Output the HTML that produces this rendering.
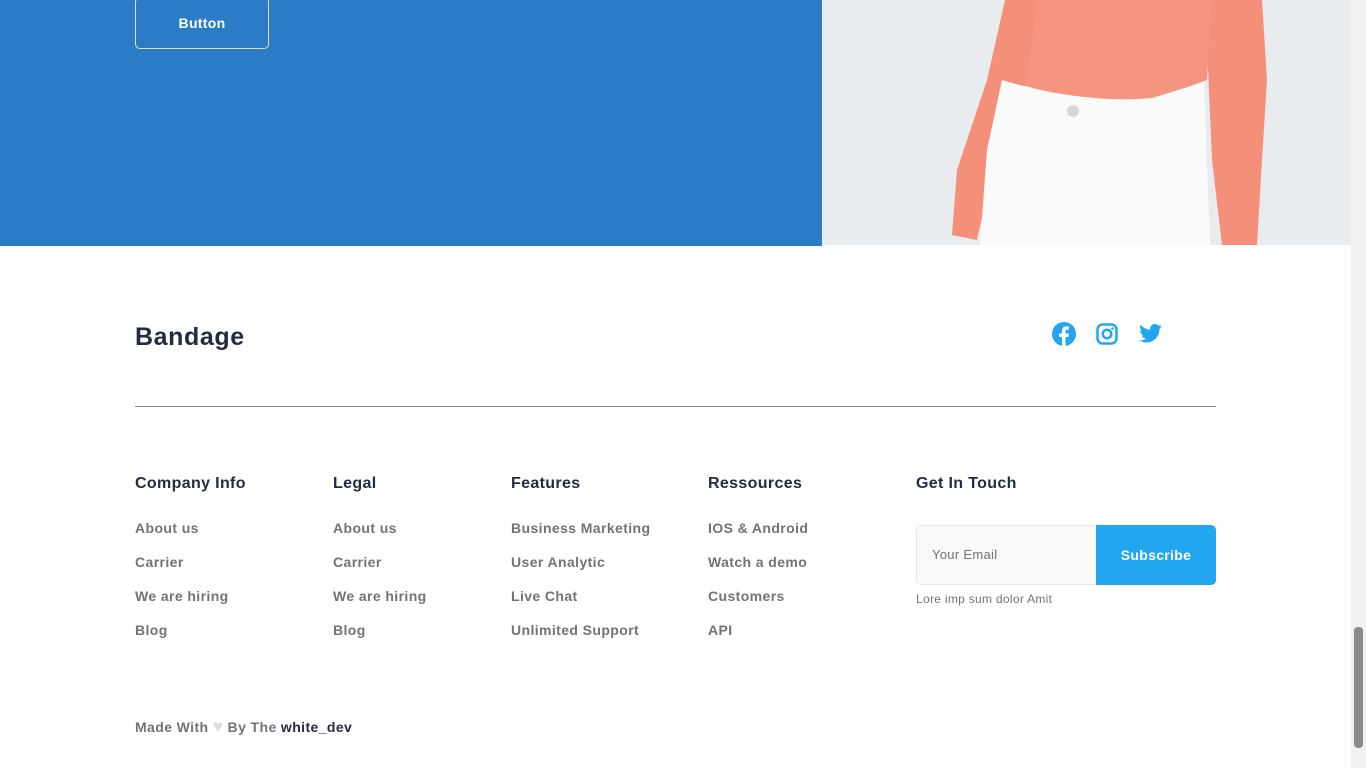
<!DOCTYPE html>
<html><head><meta charset="utf-8"><style>
*{margin:0;padding:0;box-sizing:border-box}
html,body{width:1366px;height:768px;overflow:hidden;background:#fff;font-family:"Liberation Sans",sans-serif}
.abs{position:absolute}
.blue{left:0;top:0;width:822px;height:246px;background:#2a7cc7}
.btn{left:135px;top:-3px;width:134px;height:52px;border:1px solid #e8dcc0;border-radius:5px;color:#fff;font-weight:bold;font-size:14px;text-align:center;line-height:50px;letter-spacing:0.3px}
.img{left:822px;top:0;width:529px;height:245px;background:#e8ebee;overflow:hidden}
.scroll{left:1351px;top:0;width:15px;height:768px;background:#f1f1f1}
.thumb{left:1354px;top:627px;width:9px;height:121px;background:#8a8a8a;border-radius:4px}
.brand{left:135px;top:323px;font-size:25px;font-weight:bold;color:#252b42;letter-spacing:0.6px}
.hr{left:135px;top:406px;width:1081px;height:1px;background:#8f8f8f}
h5{position:absolute;top:475px;font-size:16px;font-weight:bold;color:#252b42;letter-spacing:0.35px}
.col{position:absolute;top:520px}
.col div{font-size:14px;font-weight:bold;color:#737373;height:34px;letter-spacing:0.4px}
.email{left:916px;top:525px;width:181px;height:60px;background:#f9f9f9;border:1px solid #e6e6e6;border-radius:5px 0 0 5px;font-size:13px;color:#737373;padding-left:15px;line-height:58px;letter-spacing:0.3px}
.sub{left:1096px;top:525px;width:120px;height:60px;background:#23a6f0;border-radius:0 5px 5px 0;color:#fff;font-size:14px;font-weight:bold;text-align:center;line-height:60px;letter-spacing:0.3px}
.lore{left:916px;top:592px;font-size:12px;color:#737373;letter-spacing:0.3px}
.made{left:135px;top:719px;font-size:14px;font-weight:bold;color:#737373;letter-spacing:0.4px}
</style></head><body>
<div class="abs blue"></div>
<div class="abs btn">Button</div>
<div class="abs img">
<svg width="529" height="245" viewBox="0 0 529 245">
<rect width="529" height="245" fill="#e9ecef"/>
<path d="M383 0 L440 0 L445 80 L440 160 L435 245 L400 245 L390 160 Z" fill="#f4907a"/>
<path d="M185 0 L390 0 L385 80 L330 100 L260 102 L200 85 Z" fill="#f5957f"/>
<path d="M183 0 L215 0 L205 80 L170 170 L155 240 L130 235 L135 170 L165 80 Z" fill="#f4907a"/>
<path d="M180 80 Q260 104 330 98 L382 82 L388 245 L158 245 L165 150 Z" fill="#fafafa"/>
<circle cx="251" cy="111" r="6" fill="#d8d8d8"/>
</svg>
</div>
<div class="abs scroll"></div>
<div class="abs thumb"></div>
<div class="abs brand">Bandage</div>
<svg class="abs" style="left:1052px;top:322px" width="24" height="24" viewBox="0 0 24 24"><circle cx="12" cy="12" r="12" fill="#23a6f0"/><path d="M13.5 24V15h3l.5-3.5h-3.5V9.3c0-1 .3-1.7 1.8-1.7H17V4.5c-.3 0-1.4-.1-2.6-.1-2.6 0-4.4 1.6-4.4 4.5v2.6H7V15h3v9z" fill="#fff"/></svg>
<svg class="abs" style="left:1096px;top:323px" width="22" height="22" viewBox="0 0 22 22"><rect x="1.5" y="1.5" width="19" height="19" rx="5" fill="none" stroke="#23a6f0" stroke-width="2.5"/><circle cx="11" cy="11" r="4.3" fill="none" stroke="#23a6f0" stroke-width="2.5"/><circle cx="16.5" cy="5.5" r="1.3" fill="#23a6f0"/></svg>
<svg class="abs" style="left:1139px;top:324px" width="23" height="19" viewBox="0 0 24 20"><path d="M24 2.4a9.8 9.8 0 0 1-2.8.8A4.9 4.9 0 0 0 23.3.5a9.9 9.9 0 0 1-3.1 1.2A4.9 4.9 0 0 0 11.8 6 14 14 0 0 1 1.7.9a4.9 4.9 0 0 0 1.5 6.6 4.9 4.9 0 0 1-2.2-.6 4.9 4.9 0 0 0 3.9 4.8 4.9 4.9 0 0 1-2.2.1 4.9 4.9 0 0 0 4.6 3.4A9.9 9.9 0 0 1 0 17.3 14 14 0 0 0 7.5 19.5c9 0 14-7.5 14-14v-.6A10 10 0 0 0 24 2.4z" fill="#23a6f0"/></svg>
<div class="abs hr"></div>
<h5 style="left:135px">Company Info</h5>
<h5 style="left:333px">Legal</h5>
<h5 style="left:511px">Features</h5>
<h5 style="left:708px">Ressources</h5>
<h5 style="left:916px">Get In Touch</h5>
<div class="col" style="left:135px"><div>About us</div><div>Carrier</div><div>We are hiring</div><div>Blog</div></div>
<div class="col" style="left:333px"><div>About us</div><div>Carrier</div><div>We are hiring</div><div>Blog</div></div>
<div class="col" style="left:511px"><div>Business Marketing</div><div>User Analytic</div><div>Live Chat</div><div>Unlimited Support</div></div>
<div class="col" style="left:708px"><div>IOS &amp; Android</div><div>Watch a demo</div><div>Customers</div><div>API</div></div>
<div class="abs email">Your Email</div>
<div class="abs sub">Subscribe</div>
<div class="abs lore">Lore imp sum dolor Amit</div>
<div class="abs made">Made With <span style="color:#dcdcdc;font-size:17px;line-height:14px">&#9829;</span> By The <span style="color:#252b42">white_dev</span></div>
</body></html>
